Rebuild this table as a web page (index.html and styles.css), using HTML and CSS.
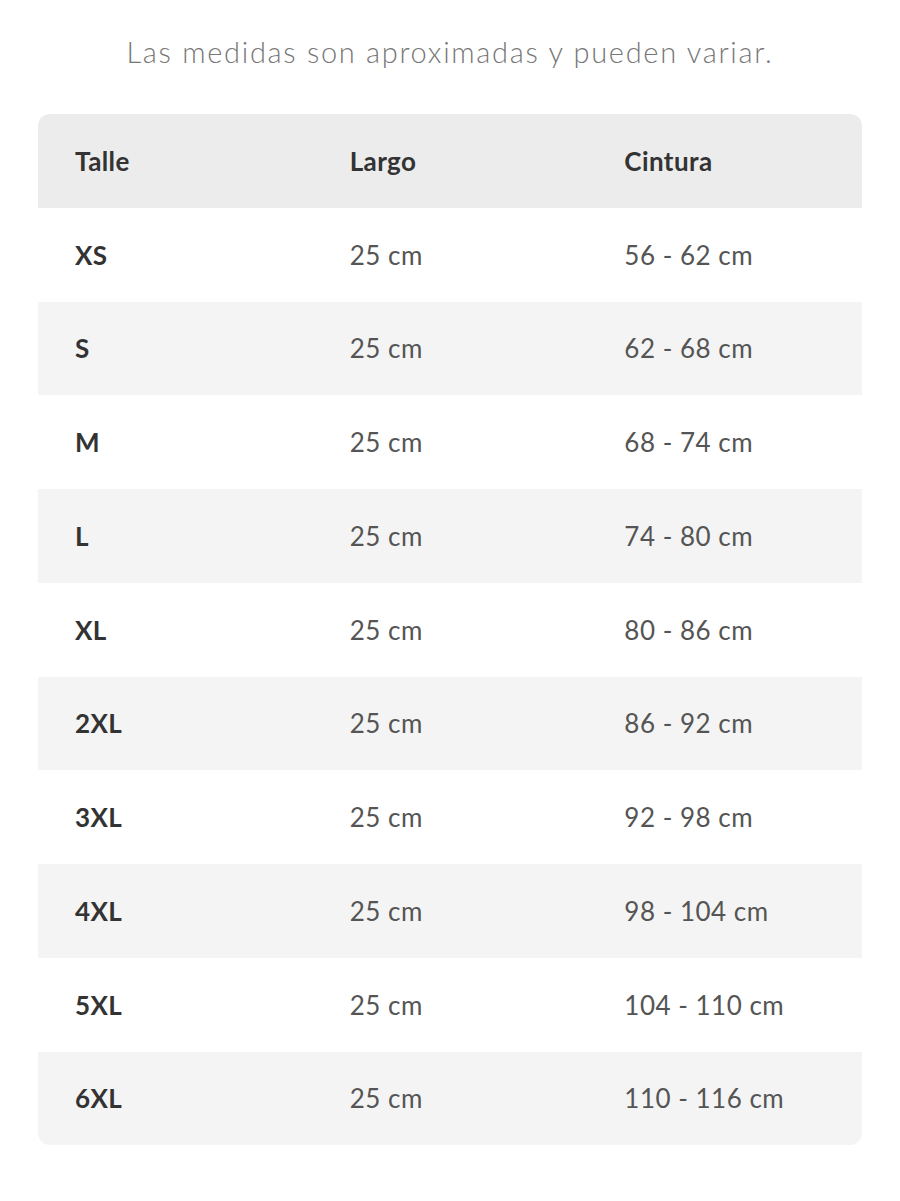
FILE: index.html
```html
<!DOCTYPE html>
<html lang="es">
<head>
<meta charset="utf-8">
<link rel="stylesheet" href="styles.css">
</head>
<body>
<div class="page">
  <p class="note">Las medidas son aproximadas y pueden variar.</p>
  <div class="table">
    <div class="row head"><div class="c">Talle</div><div class="c">Largo</div><div class="c">Cintura</div></div>
    <div class="row"><div class="c size">XS</div><div class="c">25 cm</div><div class="c">56 - 62 cm</div></div>
    <div class="row alt"><div class="c size">S</div><div class="c">25 cm</div><div class="c">62 - 68 cm</div></div>
    <div class="row"><div class="c size">M</div><div class="c">25 cm</div><div class="c">68 - 74 cm</div></div>
    <div class="row alt"><div class="c size">L</div><div class="c">25 cm</div><div class="c">74 - 80 cm</div></div>
    <div class="row"><div class="c size">XL</div><div class="c">25 cm</div><div class="c">80 - 86 cm</div></div>
    <div class="row alt"><div class="c size">2XL</div><div class="c">25 cm</div><div class="c">86 - 92 cm</div></div>
    <div class="row"><div class="c size">3XL</div><div class="c">25 cm</div><div class="c">92 - 98 cm</div></div>
    <div class="row alt"><div class="c size">4XL</div><div class="c">25 cm</div><div class="c">98 - 104 cm</div></div>
    <div class="row"><div class="c size">5XL</div><div class="c">25 cm</div><div class="c">104 - 110 cm</div></div>
    <div class="row alt"><div class="c size">6XL</div><div class="c">25 cm</div><div class="c">110 - 116 cm</div></div>
  </div>
</div>
</body>
</html>
```
FILE: styles.css
```css
html, body { margin: 0; padding: 0; background: #ffffff; }
body { font-family: "Lato", "Open Sans", sans-serif; }
.page { padding: 32px 38px 0 38px; }
.note {
  margin: 0 0 42px 0;
  text-align: center;
  color: #777777;
  font-size: 29px;
  font-weight: 300;
  line-height: 40px;
  letter-spacing: 1.7px;
}
.table { border-radius: 12px; overflow: hidden; }
.row { display: grid; grid-template-columns: 1fr 1fr 1fr; height: 93.75px; align-items: center; background: #ffffff; }
.row.alt { background: #f4f4f4; }
.row.head { background: #ececec; }
.c { padding-left: 37px; font-size: 26px; color: #555555; font-weight: 400; letter-spacing: 0.5px; }
.head .c, .c.size { color: #333333; font-weight: 700; letter-spacing: 0.4px; }
```
